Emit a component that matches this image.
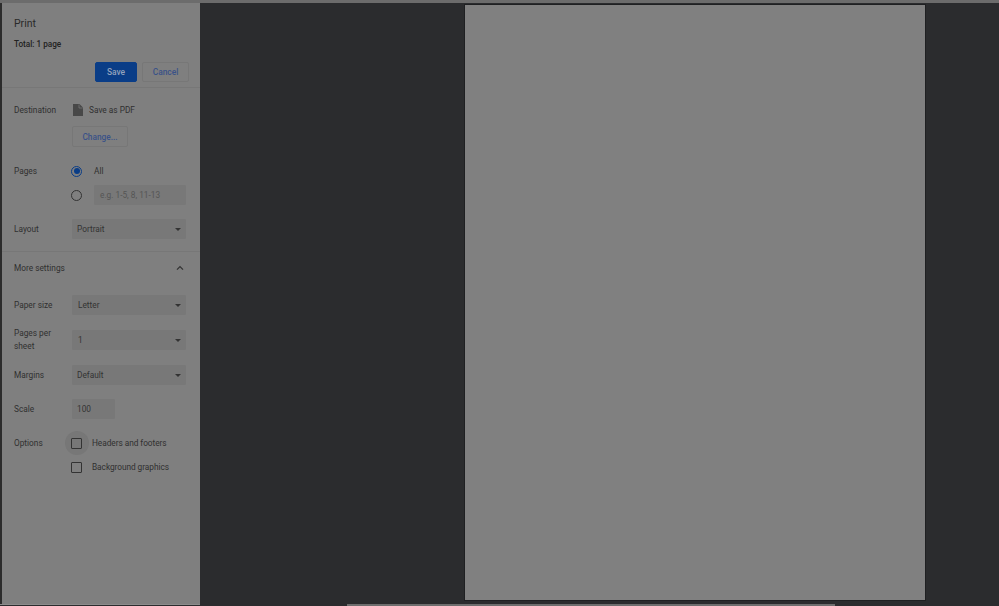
<script>
  const paper = ['Letter'];
</script>

<div class="screen">
  <div class="topstrip"></div>
  <div class="main">
    <aside class="side">
      <header class="head">
        <h1>Print</h1>
        <div class="total">Total: 1 page</div>
        <div class="actions">
          <button class="btn primary">Save</button>
          <button class="btn">Cancel</button>
        </div>
      </header>

      <section class="group g1">
        <div class="row dest">
          <span class="label">Destination</span>
          <svg class="file" viewBox="0 0 10 12" width="10" height="12"><path d="M0 0h6.5L10 3.5V12H0z" fill="#484848"/><path d="M6 0.5V4h3.5" fill="none" stroke="#7c7c7c" stroke-width=".7"/></svg>
          <span class="val">Save as PDF</span>
        </div>
        <div class="row change"><button class="btn chg">Change...</button></div>
        <div class="row pages">
          <span class="label">Pages</span>
          <span class="radio on"></span>
          <span class="val">All</span>
        </div>
        <div class="row pages2">
          <span class="label"></span>
          <span class="radio"></span>
          <span class="field range">e.g. 1-5, 8, 11-13</span>
        </div>
        <div class="row layout">
          <span class="label">Layout</span>
          <span class="select">Portrait<i></i></span>
        </div>
      </section>

      <section class="group g2">
        <div class="row more">
          <span class="label wide">More settings</span>
          <svg class="chev" viewBox="0 0 8 6" width="8" height="6"><path d="M1 4.6 4 1.6l3 3" fill="none" stroke="#333" stroke-width="1.3"/></svg>
        </div>
        <div class="row paper">
          <span class="label">Paper size</span>
          <span class="select s2">{paper[0]}<i></i></span>
        </div>
        <div class="row pps">
          <span class="label two">Pages per sheet</span>
          <span class="select s2">1<i></i></span>
        </div>
        <div class="row margins">
          <span class="label">Margins</span>
          <span class="select">Default<i></i></span>
        </div>
        <div class="row scale">
          <span class="label">Scale</span>
          <span class="field num">100</span>
        </div>
        <div class="row opt">
          <span class="label">Options</span>
          <span class="check halo"></span>
          <span class="val tight">Headers and footers</span>
        </div>
        <div class="row opt2">
          <span class="label"></span>
          <span class="check"></span>
          <span class="val tight">Background graphics</span>
        </div>
      </section>
    </aside>
    <main class="preview">
      <div class="page"></div>
    </main>
  </div>
  <div class="bottom"><span class="b1"></span><span class="b2"></span><span class="b3"></span></div>
</div>

<style>
  :global(body) { margin: 0; background: #2b2c2e; }
  .screen { width: 999px; height: 606px; overflow: hidden; display: flex; flex-direction: column; background: #2b2c2e; font-family: Roboto, "Liberation Sans", sans-serif; color: #333; }
  .topstrip { height: 3px; background: #6c6c6c; flex: none; }
  .main { flex: none; height: 601px; display: flex; border-left: 2px solid #2c2c2c; box-sizing: border-box; }
  .side { width: 198px; flex: none; background: #7f7f7f; box-sizing: border-box; isolation: isolate; }
  .head { height: 85px; box-sizing: border-box; padding: 14px 11px 0 12px; border-bottom: 1px solid #777; }
  h1 { margin: 0; font-size: 10.5px; line-height: 14px; font-weight: 400; color: #2a2a2a; }
  .total { margin-top: 7px; font-size: 8.2px; line-height: 12px; font-weight: 500; color: #222; }
  .actions { display: flex; justify-content: flex-end; gap: 5px; margin-top: 12px; }
  .btn { font: 500 8.4px Roboto, sans-serif; height: 20px; padding: 0; border-radius: 2px; border: 1px solid #777; background: #7f7f7f; color: #3a5288; width: 47px; }
  .primary { width: 42px; background: #0a3d87; border-color: #0a3d87; color: #93a3bd; }
  .group { padding-left: 12px; box-sizing: border-box; }
  .g1 { height: 148px; border-bottom: 1px solid #777; }
  .row { display: flex; align-items: center; font-size: 8.3px; color: #333; }
  .label { width: 58px; flex: none; line-height: 12.5px; color: #303030; }
  .dest { height: 12px; margin-top: 16px; }
  .file { margin: 0 6px 0 1px; }
  .val { color: #303030; }
  .tight { letter-spacing: -.05px; }
  .change { padding-left: 58px; margin-top: 10px; }
  .chg { width: 56px; height: 21px; font-size: 8.3px; }
  .pages { height: 12px; margin-top: 18px; }
  .pages2 { height: 20px; margin-top: 8px; }
  .radio { box-sizing: border-box; width: 11px; height: 11px; border: 1.3px solid #333; border-radius: 50%; margin: 0 12px 0 -1px; flex: none; position: relative; }
  .radio.on { border-color: #0a3d87; }
  .radio.on::after { content: ""; position: absolute; inset: 1.5px; border-radius: 50%; background: #0a3d87; }
  .field { box-sizing: border-box; height: 20px; background: #787878; border-radius: 1px; display: flex; align-items: center; }
  .range { width: 92px; padding-left: 6px; color: #555; }
  .layout { margin-top: 14px; }
  .select { box-sizing: border-box; width: 114px; height: 20px; background: #787878; display: flex; align-items: center; padding-left: 5px; position: relative; border-radius: 1px; }
  .select i { position: absolute; right: 5px; top: 9px; border: 3.5px solid transparent; border-top: 3.5px solid #333; border-bottom: 0; }
  .s2 { padding-left: 6px; }
  .more { height: 12px; margin-top: 10px; justify-content: space-between; padding-right: 16px; }
  .wide { width: auto; }
  .paper { margin-top: 21px; }
  .pps { margin-top: 12px; }
  .two { width: 44px; margin-right: 14px; }
  .margins { margin-top: 13px; }
  .scale { margin-top: 14px; }
  .num { width: 43px; padding-left: 5px; }
  .opt { height: 12px; margin-top: 18px; }
  .opt2 { height: 12px; margin-top: 12px; }
  .check { box-sizing: border-box; width: 11px; height: 11px; border: 1.3px solid #333; border-radius: 1px; flex: none; margin: 0 10px 0 -1px; position: relative; }
  .halo::before { content: ""; position: absolute; inset: -7.5px; border-radius: 50%; background: #777; z-index: -1; }
  .preview { flex: 1; display: flex; justify-content: flex-start; padding: 2px 0 0 265px; box-sizing: border-box; height: 598px; }
  .page { width: 460px; height: 595px; background: #808080; box-shadow: 0 0 0 1px #1f2022; }
  .bottom { flex: none; height: 2px; display: flex; background: #2b2c2e; }
  .b1 { width: 200px; height: 1px; background: #8c8c8c; }
  .b2 { width: 147px; background: #2b2c2e; }
  .b3 { width: 488px; background: #6e6e6e; }
</style>
